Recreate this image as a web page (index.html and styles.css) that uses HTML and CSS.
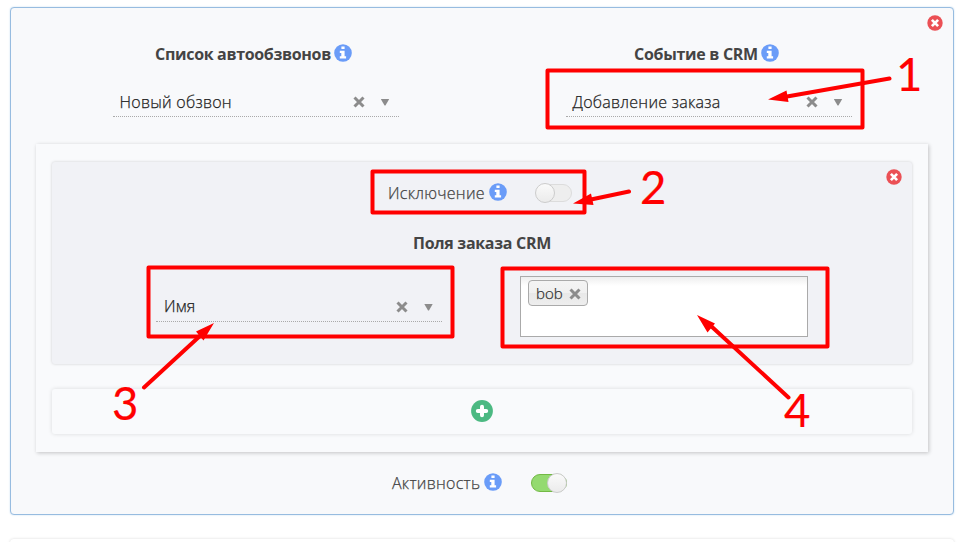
FILE: index.html
```html
<!DOCTYPE html>
<html lang="ru">
<head>
<meta charset="utf-8">
<title>CRM</title>
<link rel="stylesheet" href="styles.css">
</head>
<body>
<svg class="defs" width="0" height="0">
  <symbol id="info" viewBox="0 0 18 18"><circle cx="9" cy="9" r="8.8" fill="#6a9cf8"/><path fill="#fff" d="M7.4 2.5h3.2v2.6H7.4zM5.8 6.8h4.8v5.5h1.5v2.3H5.8v-2.3h1.5V9.1H5.8z"/></symbol>
  <symbol id="close" viewBox="0 0 16 16"><circle cx="8" cy="8" r="7.7" fill="#eb5055"/><path d="M4.900 4.900l6.200 6.200M11.100 4.900l-6.200 6.200" stroke="#fff" stroke-width="2.7"/></symbol>
  <symbol id="cross" viewBox="0 0 12 12"><path d="M1.500 1.500l9 9M10.500 1.500l-9 9" stroke="#8c8c8c" stroke-width="3"/></symbol>
  <symbol id="plus" viewBox="0 0 22 22"><circle cx="11" cy="11" r="10.9" fill="#4cb982"/><path d="M11 6.800v8.400M6.800 11h8.400" stroke="#fff" stroke-width="4" stroke-linecap="round"/></symbol>
</svg>
<main class="panel">
  <svg class="remove remove-panel"><use href="#close"/></svg>
  <div class="columns">
    <section class="column">
      <h3 class="title"><span class="t1">Список автообзвонов</span><svg class="info"><use href="#info"/></svg></h3>
      <div class="select"><span class="value v1">Новый обзвон</span><svg class="cross"><use href="#cross"/></svg><i class="caret"></i></div>
    </section>
    <section class="column">
      <h3 class="title"><span class="t2">Событие в CRM</span><svg class="info"><use href="#info"/></svg></h3>
      <div class="select"><span class="value v2">Добавление заказа</span><svg class="cross"><use href="#cross"/></svg><i class="caret"></i></div>
    </section>
  </div>
  <div class="group">
    <section class="rule">
      <svg class="remove remove-rule"><use href="#close"/></svg>
      <div class="option"><span class="o1">Исключение</span><svg class="info"><use href="#info"/></svg><span class="switch"><i class="knob"></i></span></div>
      <h3 class="title fields-title"><span class="t3">Поля заказа CRM</span></h3>
      <div class="fields">
        <div class="select"><span class="value v3">Имя</span><svg class="cross"><use href="#cross"/></svg><i class="caret"></i></div>
        <div class="tags"><span class="tag"><span>bob</span><svg class="cross"><use href="#cross"/></svg></span></div>
      </div>
    </section>
    <div class="add"><svg class="plus"><use href="#plus"/></svg></div>
  </div>
  <div class="option active"><span class="o2">Активность</span><svg class="info"><use href="#info"/></svg><span class="switch on"><i class="knob"></i></span></div>
</main>
<div class="next-panel"></div>
<svg class="marks" viewBox="0 0 967 542">
  <g class="frames">
    <rect x="547.5" y="70.5" width="315" height="57"/>
    <rect x="372.5" y="171.500" width="212" height="41"/>
    <rect x="148.500" y="267.500" width="304" height="69"/>
    <rect x="502.500" y="268.500" width="325" height="78"/>
  </g>
  <g class="shafts">
    <path d="M889.500 78.500L787 96.500M629 191.500L591 199.500M144 387.500L201 335M788.500 397.500L711 326"/>
  </g>
  <g class="heads">
    <path d="M768 99.500L786.500 90.500L788.500 102ZM573 203.500L591 193.500L593.500 205ZM214 323L203.500 340.500L196 331.500ZM697 315L715 323.500L707.500 332.500Z"/>
  </g>
  <g class="digits">
    <text x="896" y="91">1</text>
    <text x="640" y="204">2</text>
    <text x="112" y="420">3</text>
    <text x="784" y="427">4</text>
  </g>
</svg>
</body>
</html>
```

FILE: styles.css
```css
* { box-sizing: border-box; }
body { margin: 0; height: 542px; overflow: hidden; background: #fff; color: #444; font: 300 16px/24px "Open Sans", "Noto Sans", sans-serif; }
svg { display: block; flex: none; }
.defs { position: absolute; }
.panel { position: relative; width: 944px; height: 508px; margin: 7px 0 0 10px; padding: 34px 25px 0; border: 1px solid #97bce0; border-radius: 4px; background: #f8f9fb; box-shadow: 0 0 2px #c5dcf0; }
.remove { position: absolute; width: 16px; height: 16px; }
.remove-panel { right: 10px; top: 7px; }
.remove-rule { right: 10px; top: 7px; }
.columns { display: grid; grid-template-columns: 453px 453px; margin: 0 -7px; height: 102px; align-content: start; }
.column { display: flex; flex-direction: column; align-items: center; }
.title { display: flex; justify-content: center; gap: 3px; margin: 0; height: 24px; font-size: 16px; font-weight: 700; line-height: 24px; color: #444; white-space: nowrap; }
.column .title { position: relative; left: -2px; }
.t1 { letter-spacing: -0.33px; }
.t2 { letter-spacing: -0.3px; }
.t3 { letter-spacing: -0.3px; }
.info { width: 18px; height: 18px; margin-top: 2px; }
.column .select { margin-top: 21px; }
.select { display: flex; align-items: center; width: 286px; height: 30px; padding: 0 9px 0 7px; border-bottom: 1px dotted #aaa; color: #222; }
.value { flex: 1; white-space: nowrap; }
.value, .o1, .o2, .tag span { letter-spacing: .26px; -webkit-text-stroke: .25px currentColor; }
.v3 { margin: -2px 0 0 1px; }
.cross { width: 12px; height: 12px; margin-top: 1px; }
.caret { width: 9px; height: 7px; margin: 1px 0 0 16px; background: #8c8c8c; clip-path: polygon(0 0, 100% 0, 55% 100%, 45% 100%); }
.group { height: 308px; padding: 18px 16px; background: #f9fafc; box-shadow: 1px 1px 4px rgba(0,0,0,.22); }
.rule { position: relative; height: 202px; padding-top: 19px; border-radius: 3px; background: #f1f2f6; box-shadow: 0 0 3px rgba(0,0,0,.18); }
.option { display: flex; height: 24px; white-space: nowrap; }
.rule .option { margin-left: 336px; }
.o1 { width: 97px; }
.o2 { width: 88px; }
.option .info { margin-left: 4px; }
.switch { position: relative; width: 36px; height: 18px; margin: 3px 0 0 29px; border: 1px solid #dcdcdc; border-radius: 9px; background: #eee; }
.knob { position: absolute; left: -2px; top: -2px; width: 20px; height: 20px; border: 1px solid #ccc; border-radius: 50%; background: linear-gradient(#fafafa, #ebebeb); }
.on { border-color: #73b945; background: #94da70; }
.on .knob { left: 15px; }
.fields-title { margin-top: 26px; }
.fields { display: flex; gap: 78px; margin: 21px 0 0 104px; }
.fields .select { margin-top: 16px; }
.tags { width: 288px; height: 61px; padding: 3px 7px; border: 1px solid #aaa; background: linear-gradient(#eee, #fff 15%); }
.tag { display: flex; align-items: center; justify-content: space-between; width: 60px; height: 26px; padding: 0 6px 0 7px; border: 1px solid #aaa; border-radius: 4px; background: linear-gradient(#f4f4f4, #f0f0f0 50%, #e8e8e8 52%, #eee); color: #333; font-size: 15px; }
.tag span { letter-spacing: 0; }
.add { display: flex; align-items: center; justify-content: center; height: 45px; margin-top: 25px; padding-bottom: 1px; border-radius: 3px; background: #f9fafc; box-shadow: 0 0 4px rgba(0,0,0,.13); }
.plus { width: 22px; height: 22px; }
.active { margin: 19px 0 0 356px; }
.next-panel { width: 944px; height: 30px; margin: 24px 0 0 10px; border-radius: 4px; background: #fff; box-shadow: 0 0 3px rgba(0,0,0,.15); }
.marks { position: absolute; left: 0; top: 0; width: 967px; height: 542px; }
.frames, .shafts { fill: none; stroke: #f00; stroke-width: 4; stroke-linejoin: round; stroke-linecap: round; }
.heads, .digits { fill: #f00; }
.digits { font: 400 45.5px Lato, sans-serif; stroke: #f00; stroke-width: .2; }
```
